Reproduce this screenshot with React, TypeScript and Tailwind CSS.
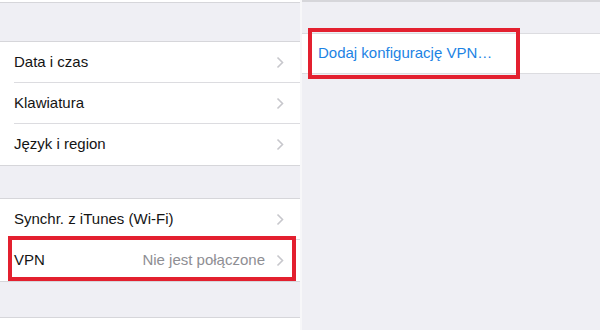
import React from 'react';

const font = { fontFamily: '"Liberation Sans", Arial, sans-serif' };

function Chevron() {
  return (
    <svg width="8" height="13" viewBox="0 0 8 13" className="shrink-0">
      <polyline points="1.5,1.5 6.5,6.5 1.5,11.5" fill="none" stroke="#c7c7cc" strokeWidth="1.6" />
    </svg>
  );
}

function Row({ label, value, last, highlight }: { label: string; value?: string; last?: boolean; highlight?: boolean }) {
  return (
    <div className="relative flex h-[41px] items-stretch bg-white pl-[14px]">
      <div className={`flex flex-1 items-center pr-[16px] ${last ? '' : 'border-b border-[#dcdce0]'}`}>
        <span className="flex-1 text-[15px] text-[#141414]">{label}</span>
        {value && <span className="mr-[11px] text-[15px] text-[#8e8e93]">{value}</span>}
        <Chevron />
      </div>
      {highlight && (
        <div className="absolute left-[8px] right-[4px] top-[-4px] bottom-[0px] border-[4px] border-[#e3202f]" />
      )}
    </div>
  );
}

function Group({ children }: { children: React.ReactNode }) {
  return <div className="border-y border-[#d6d6da] bg-white">{children}</div>;
}

export default function App() {
  return (
    <div className="flex h-[330px] w-[600px] overflow-hidden bg-[#efeff4]" style={font}>
      <div className="flex w-[300px] flex-col">
        <div className="h-[3px] shrink-0 border-b border-[#d6d6da] bg-white" />
        <div className="h-[38px] shrink-0" />
        <Group>
          <Row label="Data i czas" />
          <Row label="Klawiatura" />
          <Row label="Język i region" last />
        </Group>
        <div className="h-[32px] shrink-0" />
        <Group>
          <Row label="Synchr. z iTunes (Wi-Fi)" />
          <Row label="VPN" value="Nie jest połączone" last highlight />
        </Group>
        <div className="h-[35px] shrink-0" />
        <Group>
          <Row label="Wyzeruj" last />
        </Group>
      </div>
      <div className="flex flex-1 flex-col border-l-[2px] border-[#f7f7f9]">
        <div className="h-[2px] shrink-0 bg-[#d6d6da]" />
        <div className="h-[31px] shrink-0" />
        <div className="relative flex h-[41px] items-center border-y border-[#dcdce0] bg-white pl-[16px]">
          <span className="text-[15px] text-[#1c83e4]">Dodaj konfigurację VPN…</span>
          <div className="absolute left-[6px] top-[-6px] bottom-[-6px] w-[212px] border-[4px] border-[#e3202f]" />
        </div>
      </div>
    </div>
  );
}
